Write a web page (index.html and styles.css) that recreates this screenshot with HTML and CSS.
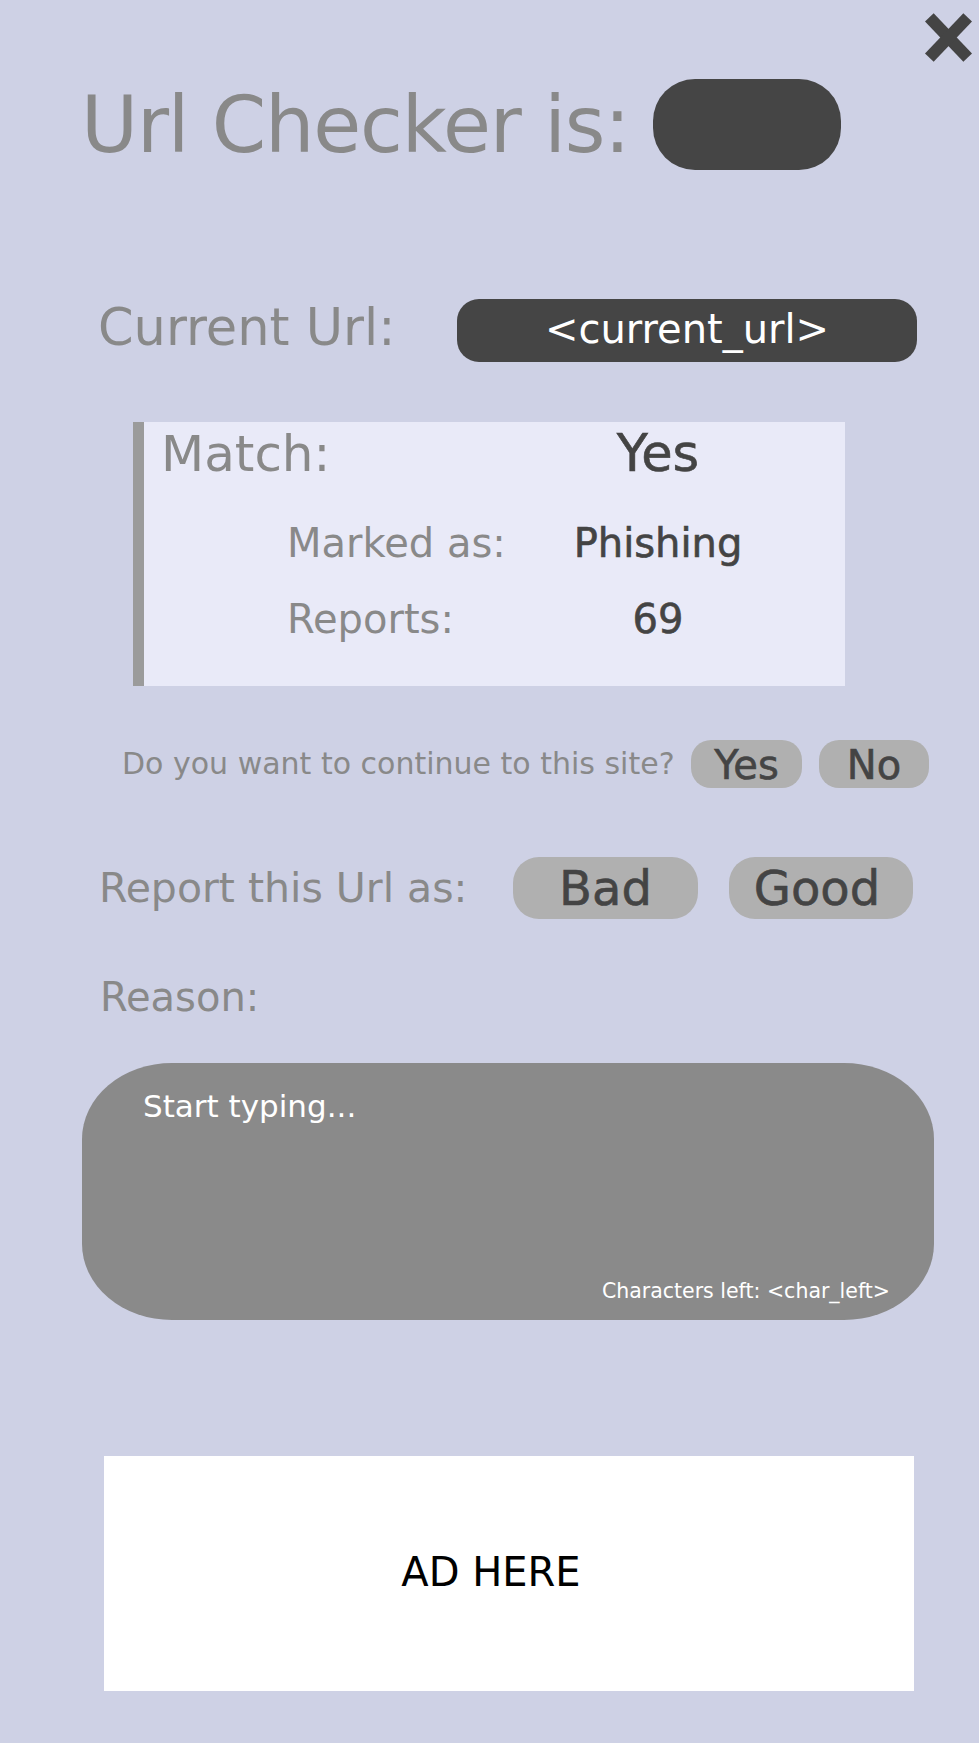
FILE: index.html
```html
<!DOCTYPE html>
<html lang="en">
<head>
<meta charset="utf-8">
<title>Url Checker</title>
<link rel="stylesheet" href="styles.css">
</head>
<body>
<main class="page">
  <button class="close" aria-label="Close">
    <svg width="47" height="49" viewBox="0 0 47 49" aria-hidden="true">
      <line x1="4.3" y1="4.3" x2="42.7" y2="44.7" stroke="#444" stroke-width="12"/>
      <line x1="42.7" y1="4.3" x2="4.3" y2="44.7" stroke="#444" stroke-width="12"/>
    </svg>
  </button>

  <header class="title-row">
    <h1 class="title">Url Checker is:</h1>
    <span class="status-pill"></span>
  </header>

  <section class="url-row">
    <span class="url-label">Current Url:</span>
    <span class="url-pill">&lt;current_url&gt;</span>
  </section>

  <section class="match-box">
    <div class="match-row">
      <span class="match-label">Match:</span>
      <span class="match-value">Yes</span>
    </div>
    <div class="detail-row detail-first">
      <span class="detail-label">Marked as:</span>
      <span class="detail-value">Phishing</span>
    </div>
    <div class="detail-row detail-second">
      <span class="detail-label">Reports:</span>
      <span class="detail-value">69</span>
    </div>
  </section>

  <section class="continue-row">
    <span class="question">Do you want to continue to this site?</span>
    <button class="small-btn">Yes</button>
    <button class="small-btn small-btn-no">No</button>
  </section>

  <section class="report-row">
    <span class="report-label">Report this Url as:</span>
    <button class="big-btn">Bad</button>
    <button class="big-btn big-btn-good">Good</button>
  </section>

  <label class="reason-label" for="reason">Reason:</label>

  <div class="reason-box">
    <textarea id="reason" class="reason-input" placeholder="Start typing..."></textarea>
    <span class="char-count">Characters left: &lt;char_left&gt;</span>
  </div>

  <aside class="ad">AD HERE</aside>
</main>
</body>
</html>
```

FILE: styles.css
```css
html, body {
  margin: 0;
  padding: 0;
}

body {
  background: #ced1e5;
  font-family: "DejaVu Sans", "Verdana", sans-serif;
  min-height: 1743px;
}

.page {
  position: relative;
  padding-top: 79px;
  padding-bottom: 51px;
}

.close {
  position: absolute;
  top: 13px;
  right: 7px;
  padding: 0;
  margin: 0;
  border: none;
  background: none;
  line-height: 0;
  cursor: pointer;
}

/* Title */
.title-row {
  display: flex;
  align-items: center;
  height: 91px;
  padding-left: 81px;
}

.title {
  margin: 0;
  font-size: 78px;
  font-weight: normal;
  line-height: 1;
  letter-spacing: -1.2px;
  color: #898989;
  white-space: nowrap;
}

.status-pill {
  display: block;
  width: 188px;
  height: 91px;
  margin-left: 24px;
  border-radius: 42px;
  background: #454545;
}

/* Current url */
.url-row {
  display: flex;
  align-items: center;
  height: 63px;
  margin-top: 129px;
  padding-left: 98px;
}

.url-label {
  width: 359px;
  font-size: 51px;
  line-height: 1;
  color: #898989;
  padding-bottom: 6px;
}

.url-pill {
  display: flex;
  align-items: center;
  justify-content: center;
  box-sizing: border-box;
  width: 460px;
  height: 63px;
  padding-bottom: 4px;
  border-radius: 22px;
  background: #454545;
  color: #fff;
  font-size: 40px;
  line-height: 1;
}

/* Match box */
.match-box {
  box-sizing: border-box;
  width: 712px;
  height: 264px;
  margin: 60px 0 0 133px;
  padding-top: 7px;
  border-left: 11px solid #9b9b9b;
  background: #e9eaf8;
}

.match-row {
  display: flex;
  height: 50px;
  line-height: 50px;
}

.match-label {
  box-sizing: border-box;
  width: 414px;
  padding-left: 17px;
  font-size: 50px;
  color: #898989;
}

.match-value {
  width: 200px;
  text-align: center;
  font-size: 51px;
  color: #444;
  -webkit-text-stroke: 0.6px #444;
}

.detail-row {
  display: flex;
  height: 38px;
  line-height: 38px;
  font-size: 40px;
}

.detail-first {
  margin-top: 45px;
}

.detail-second {
  margin-top: 38px;
}

.detail-label {
  box-sizing: border-box;
  width: 414px;
  padding-left: 143px;
  color: #898989;
}

.detail-value {
  width: 200px;
  text-align: center;
  color: #444;
  -webkit-text-stroke: 0.6px #444;
}

/* Continue */
.continue-row {
  display: flex;
  align-items: center;
  height: 48px;
  margin-top: 54px;
  padding-left: 122px;
}

.question {
  width: 569px;
  font-size: 30px;
  line-height: 1;
  color: #898989;
  white-space: nowrap;
}

.small-btn,
.big-btn {
  display: flex;
  align-items: center;
  justify-content: center;
  padding: 0;
  border: none;
  background: #b0b0b0;
  color: #444;
  font-family: inherit;
  line-height: 1;
  cursor: pointer;
  -webkit-text-stroke: 0.6px #444;
}

.small-btn {
  width: 111px;
  height: 48px;
  border-radius: 20px;
  font-size: 40px;
  padding-top: 2px;
}

.small-btn-no {
  width: 110px;
  margin-left: 17px;
}

/* Report */
.report-row {
  display: flex;
  align-items: center;
  height: 62px;
  margin-top: 69px;
  padding-left: 99px;
}

.report-label {
  width: 414px;
  font-size: 41px;
  line-height: 1;
  color: #898989;
  white-space: nowrap;
}

.big-btn {
  width: 185px;
  height: 62px;
  border-radius: 26px;
  font-size: 48px;
}

.big-btn-good {
  width: 184px;
  margin-left: 31px;
  padding-right: 8px;
}

/* Reason */
.reason-label {
  display: block;
  margin-top: 58px;
  padding-left: 100px;
  font-size: 40px;
  line-height: 1;
  color: #898989;
}

.reason-box {
  display: flex;
  flex-direction: column;
  box-sizing: border-box;
  width: 852px;
  height: 257px;
  margin: 46px 0 0 82px;
  padding: 28px 44px 19px 61px;
  border-radius: 90px / 76px;
  background: #8a8a8a;
}

.reason-input {
  flex: 1;
  padding: 0;
  margin: 0;
  border: none;
  outline: none;
  resize: none;
  background: transparent;
  color: #fff;
  font-family: inherit;
  font-size: 31px;
  line-height: 1;
}

.reason-input::placeholder {
  color: #fff;
  opacity: 1;
}

.char-count {
  align-self: flex-end;
  font-size: 20.5px;
  line-height: 1;
  color: #fff;
}

/* Ad */
.ad {
  display: flex;
  align-items: center;
  justify-content: center;
  box-sizing: border-box;
  width: 810px;
  height: 235px;
  margin: 136px 0 0 104px;
  padding: 0 36px 4px 0;
  background: #fff;
  color: #000;
  font-size: 40px;
  line-height: 1;
}
```
